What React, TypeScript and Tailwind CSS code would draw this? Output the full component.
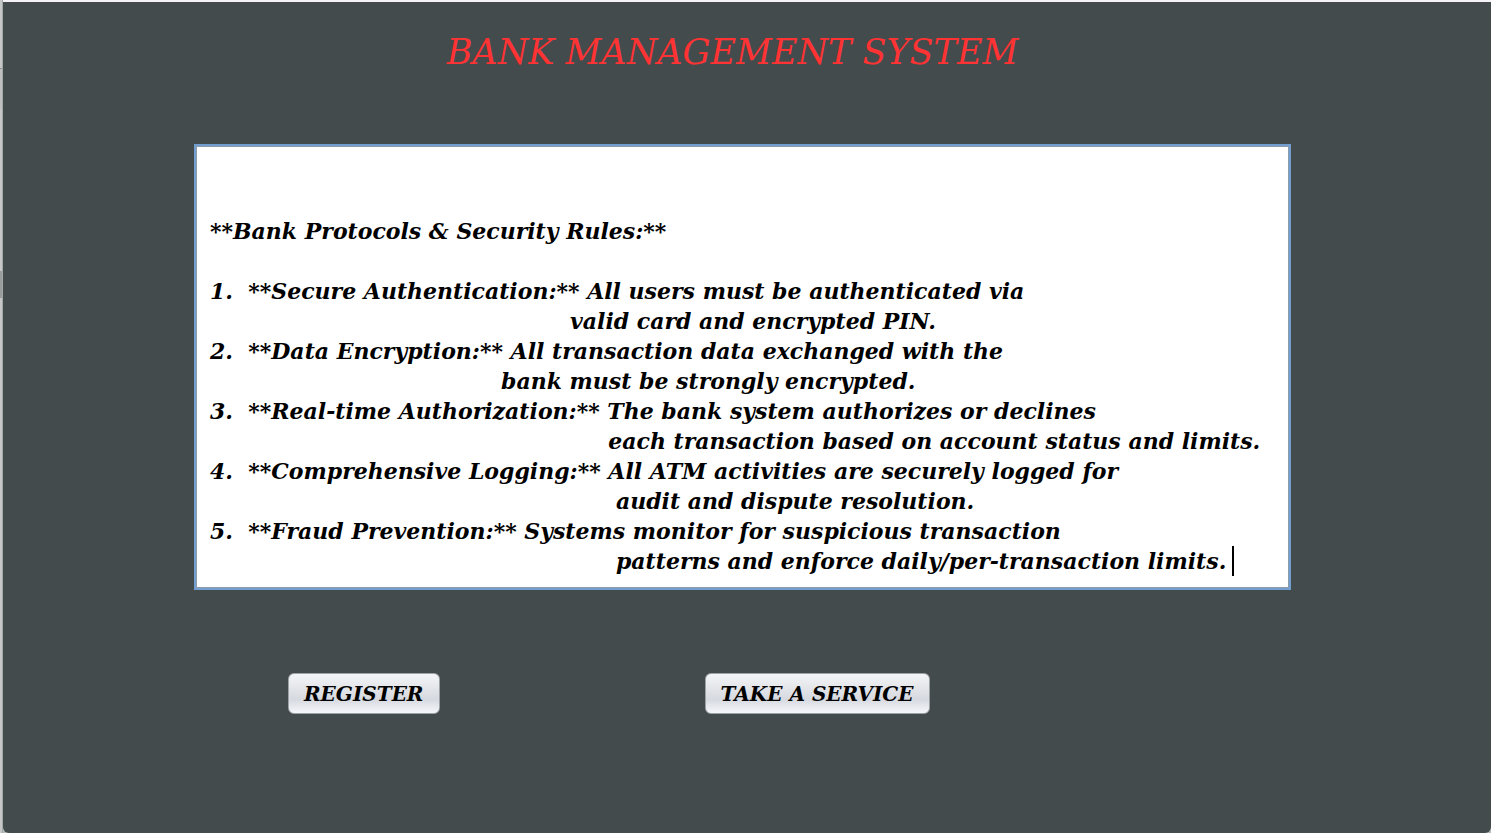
import type { ReactNode } from "react";

const indent = (count: number, text: string) => " ".repeat(count) + text;

const protocols = [
  "",
  "",
  "**Bank Protocols & Security Rules:**",
  "",
  "1.  **Secure Authentication:** All users must be authenticated via",
  indent(47, "valid card and encrypted PIN."),
  "2.  **Data Encryption:** All transaction data exchanged with the",
  indent(38, "bank must be strongly encrypted."),
  "3.  **Real-time Authorization:** The bank system authorizes or declines",
  indent(52, "each transaction based on account status and limits."),
  "4.  **Comprehensive Logging:** All ATM activities are securely logged for",
  indent(53, "audit and dispute resolution."),
  "5.  **Fraud Prevention:** Systems monitor for suspicious transaction",
  indent(53, "patterns and enforce daily/per-transaction limits."),
].join("\n");

function MetalButton({ children }: { children: ReactNode }) {
  return (
    <button
      type="button"
      className="h-[41px] rounded-md border border-[#9da2a5] bg-linear-to-b from-[#f4f5f7] via-[#d6d9df] via-65% to-[#f5f7fc] px-[15px] text-xl font-bold italic whitespace-nowrap text-black"
    >
      {children}
    </button>
  );
}

export default function App() {
  return (
    <div className="flex min-h-screen bg-[#b5b9b8] font-['Lucida_Handwriting','DejaVu_Serif',serif]">
      <div className="flex w-[3px] shrink-0 flex-col border-r border-[#a3a9a8] bg-[#c6c8c7]">
        <div className="h-[68px]" />
        <div className="h-px bg-[#8d9190]" />
        <div className="h-[40px] bg-[#bec1c0]" />
        <div className="h-[162px]" />
        <div className="h-[27px] bg-[#999d9c]" />
      </div>
      <div className="flex min-w-0 flex-1 flex-col">
        <div className="h-[2px] shrink-0 bg-[#f5f2f8]" />
        <main className="flex-1 rounded-b-md bg-[#434b4d] pr-[200px] pl-[191px]">
          <h1 className="pt-[26px] pr-5 text-center text-[35px] leading-[48px] whitespace-nowrap text-[#ff3333] italic">
            BANK MANAGEMENT SYSTEM
          </h1>
          <div className="relative mt-[68px] border-2 border-[#729fcf] bg-white">
            <textarea
              aria-label="Bank protocols and security rules"
              rows={14}
              wrap="off"
              spellCheck={false}
              defaultValue={protocols}
              className="block w-full resize-none overflow-hidden border border-[#8c9cad] bg-white px-[13px] pt-[9px] pb-[11px] text-[22px] leading-[30px] font-bold text-black italic caret-transparent outline-none"
            />
            <span className="absolute right-[55px] bottom-3 h-[30px] w-[2px] bg-black" />
          </div>
          <div className="flex gap-[265px] pt-[83px] pl-[94px]">
            <MetalButton>REGISTER</MetalButton>
            <MetalButton>TAKE A SERVICE</MetalButton>
          </div>
        </main>
      </div>
    </div>
  );
}
